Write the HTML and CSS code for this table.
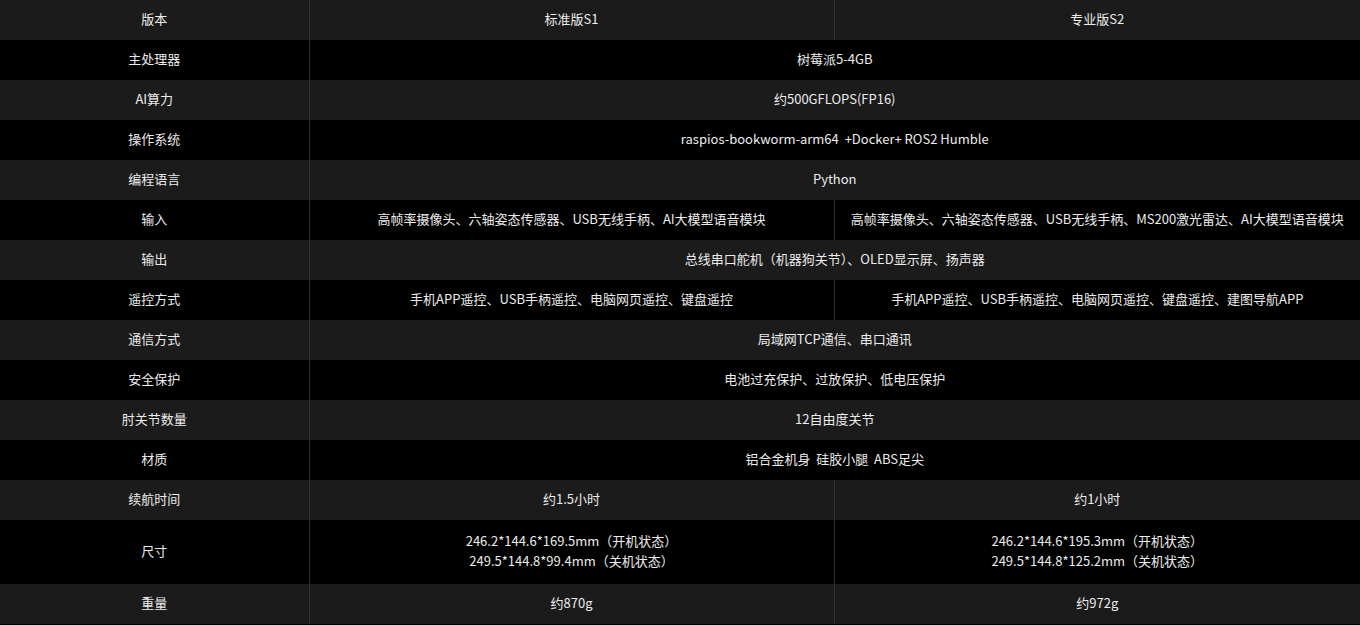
FILE: index.html
```html
<!DOCTYPE html>
<html lang="zh-CN">
<head>
<meta charset="utf-8">
<title>参数</title>
<link rel="stylesheet" href="styles.css">
</head>
<body>
<table class="spec">
  <colgroup>
    <col class="c-label">
    <col class="c-val">
    <col class="c-val-last">
  </colgroup>
  <tbody>
    <tr class="odd"><td>版本</td><td>标准版S1</td><td>专业版S2</td></tr>
    <tr class="even"><td>主处理器</td><td colspan="2">树莓派5-4GB</td></tr>
    <tr class="odd"><td>AI算力</td><td colspan="2">约500GFLOPS(FP16)</td></tr>
    <tr class="even"><td>操作系统</td><td colspan="2">raspios-bookworm-arm64 &nbsp;+Docker+ ROS2 Humble</td></tr>
    <tr class="odd"><td>编程语言</td><td colspan="2">Python</td></tr>
    <tr class="even"><td>输入</td><td>高帧率摄像头、六轴姿态传感器、USB无线手柄、AI大模型语音模块</td><td>高帧率摄像头、六轴姿态传感器、USB无线手柄、MS200激光雷达、AI大模型语音模块</td></tr>
    <tr class="odd"><td>输出</td><td colspan="2">总线串口舵机（机器狗关节）、OLED显示屏、扬声器</td></tr>
    <tr class="even"><td>遥控方式</td><td>手机APP遥控、USB手柄遥控、电脑网页遥控、键盘遥控</td><td>手机APP遥控、USB手柄遥控、电脑网页遥控、键盘遥控、建图导航APP</td></tr>
    <tr class="odd"><td>通信方式</td><td colspan="2">局域网TCP通信、串口通讯</td></tr>
    <tr class="even"><td>安全保护</td><td colspan="2">电池过充保护、过放保护、低电压保护</td></tr>
    <tr class="odd"><td>肘关节数量</td><td colspan="2">12自由度关节</td></tr>
    <tr class="even"><td>材质</td><td colspan="2">铝合金机身 &nbsp;硅胶小腿 &nbsp;ABS足尖</td></tr>
    <tr class="odd"><td>续航时间</td><td>约1.5小时</td><td>约1小时</td></tr>
    <tr class="even tall"><td>尺寸</td><td>246.2*144.6*169.5mm（开机状态）<br>249.5*144.8*99.4mm（关机状态）</td><td>246.2*144.6*195.3mm（开机状态）<br>249.5*144.8*125.2mm（关机状态）</td></tr>
    <tr class="odd"><td>重量</td><td>约870g</td><td>约972g</td></tr>
  </tbody>
</table>
</body>
</html>
```

FILE: styles.css
```css
html, body {
  margin: 0;
  padding: 0;
  background: #000;
}

body {
  font-family: "Noto Sans CJK SC", "Noto Sans", sans-serif;
  font-size: 13px;
  color: #ececec;
}

.spec {
  width: 1360px;
  border-collapse: collapse;
  table-layout: fixed;
}

.c-label { width: 309px; }
.c-val { width: 525px; }
.c-val-last { width: 526px; }

.spec td {
  height: 40px;
  padding: 0 4px 2px;
  box-sizing: border-box;
  line-height: 20px;
  text-align: center;
  vertical-align: middle;
  border-left: 1px solid #333;
  white-space: nowrap;
}

.spec td:first-child {
  border-left: none;
}

.odd { background: #1b1b1b; }
.even { background: #000; }

.tall td {
  height: 64px;
}
```
